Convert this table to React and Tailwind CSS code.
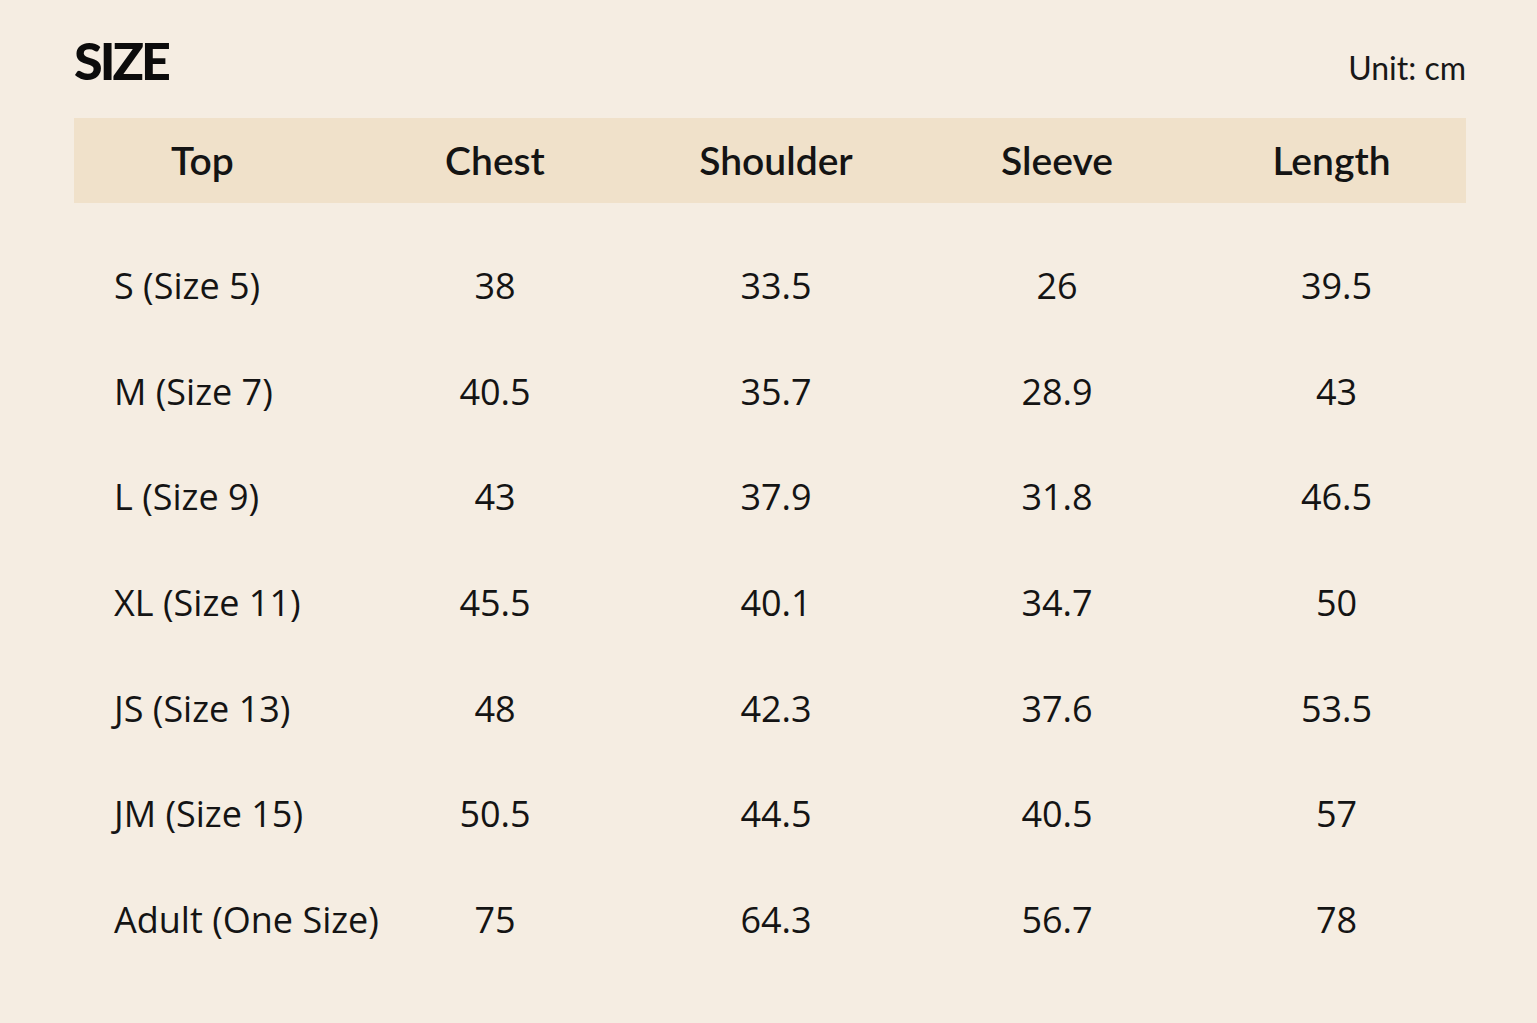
export default function App() {
  const rows = [
    ["S (Size 5)", "38", "33.5", "26", "39.5"],
    ["M (Size 7)", "40.5", "35.7", "28.9", "43"],
    ["L (Size 9)", "43", "37.9", "31.8", "46.5"],
    ["XL (Size 11)", "45.5", "40.1", "34.7", "50"],
    ["JS (Size 13)", "48", "42.3", "37.6", "53.5"],
    ["JM (Size 15)", "50.5", "44.5", "40.5", "57"],
    ["Adult (One Size)", "75", "64.3", "56.7", "78"],
  ];
  const heads = ["Chest", "Shoulder", "Sleeve", "Length"];
  const lato = { fontFamily: 'Lato, "Open Sans", sans-serif' };
  return (
    <div
      className="w-[1537px] h-[1023px] bg-[#f5ede2] text-[#141414] overflow-hidden"
      style={{ fontFamily: '"Open Sans", "Noto Sans", sans-serif' }}
    >
      <div className="pl-[74px] pr-[71px] pt-[28px]">
        <div className="flex items-end justify-between h-[90px]">
          <div className="text-[52px] font-black leading-none tracking-[-3px] mb-[32px] text-[#0c0c0c]" style={lato}>
            SIZE
          </div>
          <div className="text-[32px] leading-none mb-[34px] text-[#181818]" style={lato}>
            Unit: cm
          </div>
        </div>
        <div className="grid grid-cols-[281px_280px_282px_280px_1fr] h-[85px] items-center bg-[#f0e1ca]">
          <div className="pl-[97px] text-[39px] font-semibold leading-none" style={lato}>
            Top
          </div>
          {heads.map((h) => (
            <div key={h} className="text-center text-[39px] font-semibold leading-none" style={lato}>
              {h}
            </div>
          ))}
        </div>
        <div className="pt-[30px]">
          {rows.map((r) => (
            <div
              key={r[0]}
              className="grid grid-cols-[281px_280px_282px_280px_1fr] h-[105.7px] items-center text-[36px] leading-none"
            >
              <div className="pl-[40px] font-medium whitespace-nowrap">{r[0]}</div>
              {r.slice(1).map((v, i) => (
                <div key={i} className={i === 3 ? "text-center pl-[10px]" : "text-center"}>
                  {v}
                </div>
              ))}
            </div>
          ))}
        </div>
      </div>
    </div>
  );
}
